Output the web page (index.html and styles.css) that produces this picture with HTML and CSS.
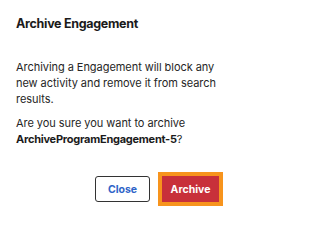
FILE: index.html
```html
<!DOCTYPE html>
<html>
<head>
<meta charset="utf-8">
<link rel="stylesheet" href="styles.css">
</head>
<body>
<div class="modal">
  <div class="modal-header">
    <h2 class="modal-title">Archive Engagement</h2>
  </div>
  <div class="modal-body">
    <p class="msg">Archiving a Engagement will block any new activity and remove it from search results.</p>
    <p class="msg">Are you sure you want to archive <strong>ArchiveProgramEngagement-5</strong>?</p>
  </div>
  <div class="modal-footer">
    <button class="btn btn-close" type="button">Close</button>
    <button class="btn btn-archive" type="button">Archive</button>
  </div>
</div>
</body>
</html>
```
FILE: styles.css
```css
html, body {
  margin: 0;
  padding: 0;
  background: #ffffff;
}
body {
  font-family: Inter, "Liberation Sans", Arial, sans-serif;
  color: #222222;
  width: 235px;
  height: 216px;
  overflow: hidden;
}
.modal {
  display: flex;
  flex-direction: column;
}
.modal-header {
  padding: 16px 16px 0 16px;
}
.modal-title {
  margin: 0;
  font-size: 12.5px;
  line-height: 16px;
  font-weight: 700;
  letter-spacing: -0.3px;
  color: #1b1b1b;
}
.modal-body {
  padding: 27px 16px 0 16px;
}
.msg {
  margin: 0 0 8px 0;
  font-size: 11px;
  line-height: 16px;
  letter-spacing: -0.05px;
  color: #262626;
}
.msg:last-child {
  margin-bottom: 0;
}
.msg strong {
  font-weight: 700;
  letter-spacing: -0.25px;
  color: #1b1b1b;
}
.modal-footer {
  display: flex;
  justify-content: flex-end;
  gap: 12px;
  padding: 29px 16px 0 16px;
}
.btn {
  height: 26px;
  border-radius: 3px;
  font-family: inherit;
  font-size: 10.5px;
  font-weight: 700;
  padding: 0;
  cursor: pointer;
}
.btn-close {
  width: 55px;
  background: #ffffff;
  border: 1px solid #333333;
  color: #2f64c8;
}
.btn-archive {
  width: 57px;
  background: #c8303a;
  border: 1px solid #c8303a;
  color: #ffffff;
  border-radius: 0;
  outline: 4px solid #f7941d;
  outline-offset: 0;
}
```
